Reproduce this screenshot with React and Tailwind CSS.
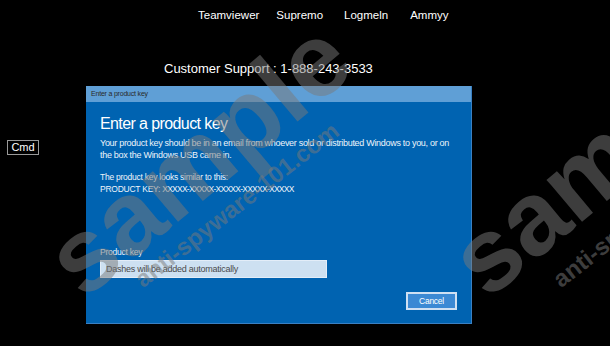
export default function App() {
  return (
    <div className="relative w-[610px] h-[346px] bg-black overflow-hidden font-['Liberation_Sans',Arial,sans-serif] text-white">
      {/* remote tools */}
      <nav className="flex pl-[198px] pt-[8px] text-[11.5px] leading-[14px]">
        <span>Teamviewer</span>
        <span className="ml-[17px]">Supremo</span>
        <span className="ml-[21px]">Logmeln</span>
        <span className="ml-[22px]">Ammyy</span>
      </nav>

      <div className="pl-[164px] mt-[39px] text-[13px] leading-[16px]">Customer Support : 1-888-243-3533</div>

      <div className="flex items-start mt-[9px]">
        <div className="ml-[7px] mt-[54px] w-[32px] h-[15px] border border-[#9a9a9a] text-[11px] leading-[13px] text-center">
          Cmd
        </div>

        {/* product key dialog */}
        <div className="ml-[47px] w-[386px] h-[238px] flex flex-col bg-[#0063b1] border-r border-b border-[#3a80c2] tracking-[-0.25px]">
          <div className="h-[16px] shrink-0 bg-[#5f9fd6] pl-[5px] text-[7px] tracking-[-0.2px] leading-[16px] text-[#2a2a2a]">
            Enter a product key
          </div>
          <div className="flex flex-col flex-1 pl-[14px] pr-[14px] pt-[12px]">
            <h1 className="text-[16px] leading-[20px] font-normal tracking-[-0.6px]">Enter a product key</h1>
            <p className="mt-[3px] text-[9px] leading-[12px] tracking-[-0.3px] text-[#eef4fa]">
              Your product key should be in an email from whoever sold or distributed Windows to you, or on the box the Windows USB came in.
            </p>
            <p className="mt-[10px] text-[8.5px] leading-[12px] text-[#eef4fa]">
              The product key looks similar to this:
              <br />
              PRODUCT KEY: <span className="tracking-[-0.75px]">XXXXX-XXXXX-XXXXX-XXXXX-XXXXX</span>
            </p>
            <label className="mt-[51px] text-[8.5px] leading-[12px] text-[#eef4fa]">Product key</label>
            <div className="mt-[2px] w-[227px] h-[18px] bg-[#cde0f1] border border-[#e3edf8] pl-[5px] text-[9px] leading-[16px] text-[#4a4a4a]">
              Dashes will be added automatically
            </div>
            <div className="flex justify-end mt-[14px]">
              <button className="w-[51px] h-[18px] bg-[#3b89d4] border-2 border-[#cfe0f3] text-[8.5px] leading-[14px] text-white">
                Cancel
              </button>
            </div>
          </div>
        </div>
      </div>

      {/* watermark */}
      <div className="pointer-events-none absolute inset-0 z-10 font-['Liberation_Sans',Arial,sans-serif] font-bold whitespace-nowrap text-[#7a7a7a]/50">
        <span className="absolute left-[198px] top-[158px] -translate-x-1/2 -translate-y-1/2 -rotate-[40deg] text-[104px] leading-none">sample</span>
        <span className="absolute left-[237px] top-[205px] -translate-x-1/2 -translate-y-1/2 -rotate-[38deg] text-[24px] leading-none">anti-spyware-101.com</span>
        <span className="absolute left-[602px] top-[158px] -translate-x-1/2 -translate-y-1/2 -rotate-[40deg] text-[104px] leading-none">sample</span>
        <span className="absolute left-[655px] top-[205px] -translate-x-1/2 -translate-y-1/2 -rotate-[38deg] text-[24px] leading-none">anti-spyware-101.com</span>
      </div>
    </div>
  );
}
